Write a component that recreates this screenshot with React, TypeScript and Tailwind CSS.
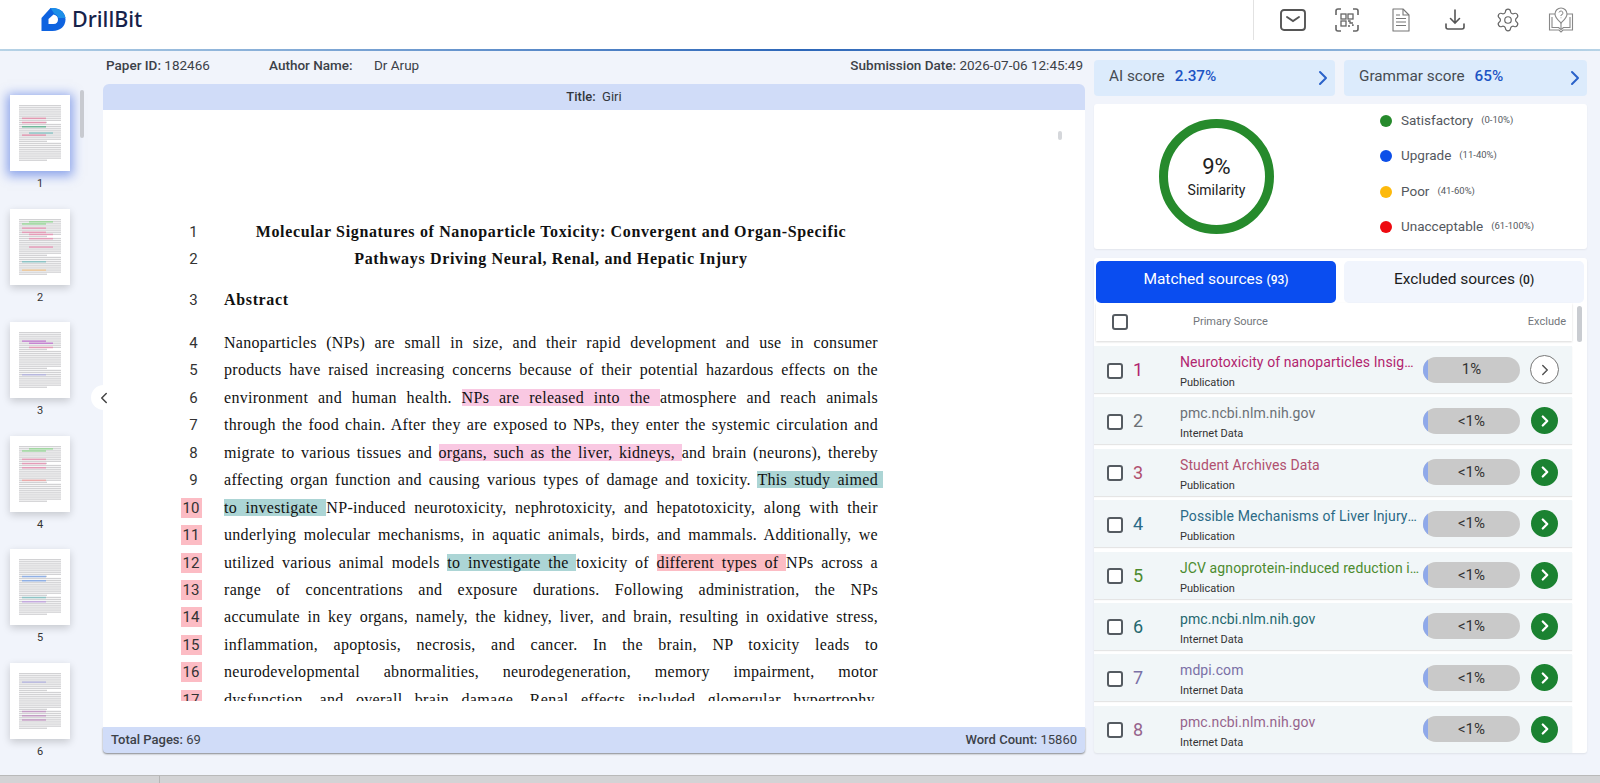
import { ChevronLeft, ChevronRight, Settings } from "lucide-react";

const sources = [
  { n: 1, title: "Neurotoxicity of nanoparticles Insights from Caenorhabditis", kind: "Publication", color: "text-[#b1256f]", pct: "1%", excluded: true },
  { n: 2, title: "pmc.ncbi.nlm.nih.gov", kind: "Internet Data", color: "text-[#6b7075]", pct: "<1%" },
  { n: 3, title: "Student Archives Data", kind: "Publication", color: "text-[#b0506f]", pct: "<1%" },
  { n: 4, title: "Possible Mechanisms of Liver Injury Induced by Nanoparticles", kind: "Publication", color: "text-[#2b6a86]", pct: "<1%" },
  { n: 5, title: "JCV agnoprotein-induced reduction in CXCL5/LIX secretion", kind: "Publication", color: "text-[#4c8b2f]", pct: "<1%" },
  { n: 6, title: "pmc.ncbi.nlm.nih.gov", kind: "Internet Data", color: "text-[#25686f]", pct: "<1%" },
  { n: 7, title: "mdpi.com", kind: "Internet Data", color: "text-[#7a70a6]", pct: "<1%" },
  { n: 8, title: "pmc.ncbi.nlm.nih.gov", kind: "Internet Data", color: "text-[#96648c]", pct: "<1%" },
];

const legend = [
  { label: "Satisfactory", range: "(0-10%)", dot: "bg-[#268a2c]" },
  { label: "Upgrade", range: "(11-40%)", dot: "bg-[#0d4fe8]" },
  { label: "Poor", range: "(41-60%)", dot: "bg-[#fdb90b]" },
  { label: "Unacceptable", range: "(61-100%)", dot: "bg-[#ee0a10]" },
];

const pink = "bg-[#f9c8e2]";
const teal = "bg-[#acd5d5]";
const red = "bg-[#fcbcc4]";

// page thumbnails: [row, colour] marks the highlighted rows
const thumbs: { active?: boolean; marks: Record<number, string> }[] = [
  { active: true, marks: { 6: "#e58aa8", 8: "#e58aa8", 10: "#58b08a", 13: "#7cc0c0", 14: "#e58aa8" } },
  { marks: { 1: "#8fd88f", 2: "#8fd88f", 4: "#e88fb0", 6: "#e88fb0", 7: "#e88fb0", 9: "#e88fb0", 13: "#e88fb0", 20: "#7cc0c0", 24: "#f2c48a" } },
  { marks: { 4: "#c070d0", 5: "#c070d0", 7: "#e88fb0", 20: "#b0b0e0" } },
  { marks: { 1: "#8fd88f", 2: "#8fd88f", 6: "#e88fb0", 8: "#e88fb0", 10: "#e88fb0", 16: "#f0a0a0" } },
  { marks: { 8: "#80a8e8", 10: "#80a8e8", 18: "#7cc0c0", 20: "#c0a0e0" } },
  { marks: { 4: "#b0b0e0", 18: "#c090c0", 20: "#c090c0", 22: "#c090c0" } },
];

function ThumbArt({ marks }: { marks: Record<number, string> }) {
  const rows = Array.from({ length: 27 }, (_, i) => i);
  return (
    <svg viewBox="0 0 60 76" className="block w-[60px] h-[76px]">
      <rect width="60" height="76" fill="#ffffff" />
      {rows.map((i) => (
        <rect key={i} x="9" y={10 + i * 2.1} width={i % 9 === 8 ? 28 : 42} height="1.3" fill="#b4b4b8" opacity="0.6" />
      ))}
      {rows.filter((i) => marks[i]).map((i) => (
        <rect key={i} x={12 + ((i * 7) % 14)} y={10 + i * 2.1} width="24" height="1.5" fill={marks[i]} opacity="0.8" />
      ))}
    </svg>
  );
}

function Logo() {
  return (
    <svg viewBox="0 0 24 24" className="w-[25px] h-[24px]">
      <path d="M0 11 L9 1 H11 C19 1 24 6 24 12.5 C24 19 19 24 11 24 H0 Z" fill="#0e63e0" />
      <path d="M9 1 H11 C18 1 23 5 24 11 L17 11 C16 8.5 15 7.5 13 7 Z" fill="#1d8fe8" />
      <path d="M7 12 L12 7.5 C15 8 16.5 10 16.5 12.5 C16.5 15 15 17 12 17 H7 Z" fill="#ffffff" />
    </svg>
  );
}

function MailIcon() {
  return (
    <svg viewBox="0 0 26 22" className="w-[26px] h-[22px]" fill="none" stroke="#555" strokeWidth="1.9">
      <rect x="1" y="1" width="24" height="20" rx="3" />
      <path d="M7 8 L13 12 L19 8" strokeLinecap="round" />
    </svg>
  );
}

function QrIcon() {
  return (
    <svg viewBox="0 0 24 24" className="w-[24px] h-[24px]" fill="none" stroke="#666" strokeWidth="1.3">
      <path d="M1 7 V3 Q1 1 3 1 H6 M18 1 H21 Q23 1 23 3 V7 M23 17 V21 Q23 23 21 23 H18 M6 23 H3 Q1 23 1 21 V17" strokeWidth="1.6" />
      <rect x="6" y="6" width="5" height="5" />
      <rect x="13" y="6" width="5" height="5" />
      <rect x="6" y="13" width="5" height="5" />
      <path d="M13 13 H15 V15 H18 M13 18 H15 M17 17 H18 V18" />
    </svg>
  );
}

function DocIcon() {
  return (
    <svg viewBox="0 0 18 24" className="w-[18px] h-[24px]" fill="none" stroke="#777" strokeWidth="1.1">
      <path d="M1 1 H11 L17 7 V23 H1 Z" strokeLinejoin="round" />
      <path d="M11 1 V7 H17" />
      <path d="M4 7 H8 M4 10.5 H14 M4 14 H14 M4 17.5 H14" />
    </svg>
  );
}

function DownloadIcon() {
  return (
    <svg viewBox="0 0 20 22" className="w-[20px] h-[22px]" fill="none" stroke="#555" strokeWidth="1.6">
      <path d="M10 1 V14 M5.5 9.5 L10 14 L14.5 9.5" strokeLinecap="round" />
      <path d="M1 15 V18 Q1 20 3 20 H17 Q19 20 19 18 V15" strokeLinecap="round" />
    </svg>
  );
}

function BookHelpIcon() {
  return (
    <svg viewBox="0 0 26 26" className="w-[26px] h-[26px]" fill="none" stroke="#888" strokeWidth="1.1">
      <path d="M7 7 H1.5 V23 H11 L13 25 L15 23 H24.5 V7 H19" />
      <path d="M4 10 V20.5 H10.5 L13 22.5 L15.5 20.5 H22 V10" />
      <path d="M13 16 C9 12 7 10.5 7 7 A6 6 0 0 1 19 7 C19 10.5 17 12 13 16 Z" fill="#fff" />
      <path d="M13 16 V22" />
      <path d="M11 5.5 A2 2 0 1 1 13 8 V9 M13 10.5 V11.2" strokeWidth="1" />
    </svg>
  );
}

function Checkbox() {
  return <span className="block w-[16px] h-[16px] shrink-0 rounded-[3px] border-2 border-[#555b61] bg-white" />;
}

function DocLine({ no, flag, children, last, center, bold, className }: {
  no: number;
  flag?: boolean;
  children: React.ReactNode;
  last?: boolean;
  center?: boolean;
  bold?: boolean;
  className?: string;
}) {
  return (
    <div className={`flex items-center h-[27.45px] ${className || ""}`}>
      <div className="w-[44px] shrink-0 flex justify-center">
        <span className={`w-[21px] text-center text-[15px] leading-[20px] font-['Roboto',sans-serif] tracking-normal text-[#333] ${flag ? "bg-[#fcbcc4]" : "ml-[5px]"}`}>
          {no}
        </span>
      </div>
      <div
        className={`w-[654px] ml-[11px] text-[#111] ${
          center ? "text-center whitespace-nowrap" : last ? "text-left" : "text-justify [text-align-last:justify]"
        } ${bold ? "font-bold" : ""}`}
      >
        {children}
      </div>
    </div>
  );
}

export default function App() {
  return (
    <div className="w-[1600px] h-[783px] overflow-hidden flex flex-col bg-[#f1f4fb] font-['Roboto',sans-serif]">
      {/* Header */}
      <header className="h-[49px] shrink-0 bg-white flex items-start justify-between">
        <div className="flex items-center ml-[41px] mt-[7px] gap-[6px]">
          <Logo />
          <span className="text-[21.5px] leading-[24px] font-medium text-[#16224a] font-['Noto_Sans',sans-serif]">DrillBit</span>
        </div>
        <div className="flex items-center h-[40px]">
          <div className="w-px h-[40px] bg-[#e2e2e2]" />
          <div className="flex items-center h-[38px] pl-[26px] pr-[26px] gap-[29px]">
            <MailIcon />
            <QrIcon />
            <span className="ml-[4px] mr-[2px] flex"><DocIcon /></span>
            <span className="ml-[4px] mr-[1px] flex"><DownloadIcon /></span>
            <Settings className="w-[26px] h-[26px] text-[#666] mr-[-2px]" strokeWidth={1.1} />
            <BookHelpIcon />
          </div>
        </div>
      </header>
      <div className="h-[2px] shrink-0 bg-gradient-to-r from-[#b7d3e6] via-[#2c66b8] to-[#b7d3e6]" />

      <div className="flex-1 flex min-h-0">
        {/* Thumbnails */}
        <aside className="w-[103px] shrink-0 relative overflow-hidden pt-[44px] pl-[10px]">
          <div className="flex flex-col gap-[18.6px] w-[60px]">
            {thumbs.map((t, i) => (
              <div key={i} className="flex flex-col items-center">
                <div className={t.active ? "shadow-[0_2px_10px_3px_rgba(60,100,220,0.55)]" : "shadow-[0_3px_8px_rgba(0,0,0,0.18)]"}>
                  <ThumbArt marks={t.marks} />
                </div>
                <span className="mt-[7px] h-[12px] text-[11px] leading-[12px] text-[#333]">{i + 1}</span>
              </div>
            ))}
          </div>
          <div className="absolute left-[80px] top-[39px] w-[4px] h-[48px] rounded bg-[#c8cad0]" />
        </aside>

        {/* Document */}
        <main className="w-[982px] shrink-0 flex flex-col">
          <div className="h-[33px] shrink-0 flex items-center justify-between text-[13.5px] leading-[26px] text-[#3c4148] pb-[9px] pt-[4px]">
            <div className="flex">
              <span className="ml-[3px] w-[163px]"><span className="font-medium">Paper ID:</span> 182466</span>
              <span className="w-[105px] font-medium">Author Name:</span>
              <span>Dr Arup</span>
            </div>
            <span className="mr-[2px]"><span className="font-medium">Submission Date:</span> 2026-07-06 12:45:49</span>
          </div>
          <div className="h-[26px] shrink-0 rounded-t-[6px] bg-[#d0dcf8] flex items-center justify-center text-[13px] text-[#33373d]">
            <span className="font-medium">Title:</span>&nbsp; Giri
          </div>
          <div className="relative h-[617px] shrink-0 bg-white">
            <div className="absolute left-[-12px] top-[275px] w-[25px] h-[25px] rounded-full bg-white flex items-center justify-center">
              <ChevronLeft className="w-[18px] h-[18px] text-[#444]" strokeWidth={2} />
            </div>
            <div className="absolute left-[955px] top-[21px] w-[4px] h-[9px] rounded-sm bg-[#d5d7db]" />
            <div className="h-[591px] ml-[66px] pt-[108px] overflow-hidden font-['Liberation_Serif',serif] text-[16px] leading-[22px] tracking-[0.3px]">
              <DocLine no={1} center bold className="tracking-[0.65px]">Molecular Signatures of Nanoparticle Toxicity: Convergent and Organ-Specific</DocLine>
              <DocLine no={2} center bold className="tracking-[0.65px]">Pathways Driving Neural, Renal, and Hepatic Injury</DocLine>
              <DocLine no={3} last bold className="mt-[13.5px] tracking-[0.65px]">Abstract</DocLine>
              <DocLine no={4} className="mt-[15.5px]">Nanoparticles (NPs) are small in size, and their rapid development and use in consumer</DocLine>
              <DocLine no={5}>products have raised increasing concerns because of their potential hazardous effects on the</DocLine>
              <DocLine no={6}>environment and human health. <span className={pink}>NPs are released into the </span>atmosphere and reach animals</DocLine>
              <DocLine no={7}>through the food chain. After they are exposed to NPs, they enter the systemic circulation and</DocLine>
              <DocLine no={8}>migrate to various tissues and <span className={pink}>organs, such as the liver, kidneys, </span>and brain (neurons), thereby</DocLine>
              <DocLine no={9}>affecting organ function and causing various types of damage and toxicity. <span className={`${teal} pr-[5px] mr-[-5px]`}>This study aimed</span></DocLine>
              <DocLine no={10} flag><span className={teal}>to investigate </span>NP-induced neurotoxicity, nephrotoxicity, and hepatotoxicity, along with their</DocLine>
              <DocLine no={11} flag>underlying molecular mechanisms, in aquatic animals, birds, and mammals. Additionally, we</DocLine>
              <DocLine no={12} flag>utilized various animal models <span className={teal}>to investigate the </span>toxicity of <span className={red}>different types of </span>NPs across a</DocLine>
              <DocLine no={13} flag>range of concentrations and exposure durations. Following administration, the NPs</DocLine>
              <DocLine no={14} flag>accumulate in key organs, namely, the kidney, liver, and brain, resulting in oxidative stress,</DocLine>
              <DocLine no={15} flag>inflammation, apoptosis, necrosis, and cancer. In the brain, NP toxicity leads to</DocLine>
              <DocLine no={16} flag>neurodevelopmental abnormalities, neurodegeneration, memory impairment, motor</DocLine>
              <DocLine no={17} flag>dysfunction, and overall brain damage. Renal effects included glomerular hypertrophy,</DocLine>
            </div>
          </div>
          <div className="h-[26px] shrink-0 rounded-b-[4px] bg-[#d0dcf8] shadow-[0_1px_2px_rgba(0,0,0,0.45)] flex items-center justify-between px-[8px] text-[13px] text-[#3c4148]">
            <span><span className="font-medium">Total Pages:</span> 69</span>
            <span><span className="font-medium">Word Count:</span> 15860</span>
          </div>
        </main>

        {/* Right column */}
        <section className="w-[493px] shrink-0 ml-[9px] pt-[9px] flex flex-col">
          <div className="flex gap-[9px] h-[36px] shrink-0">
            <ScoreBox label="AI score" value="2.37%" className="w-[241px]" />
            <ScoreBox label="Grammar score" value="65%" className="w-[243px]" />
          </div>

          <div className="mt-[8px] h-[145px] shrink-0 w-[493px] bg-white rounded-[3px] flex shadow-[0_1px_2px_rgba(0,0,0,0.06)]">
            <div className="ml-[65px] mt-[15px] w-[115px] h-[115px] rounded-full border-[9.5px] border-[#268a2c] flex flex-col items-center justify-center text-[#222]">
              <span className="text-[22px] leading-[24px] mt-[2px]">9%</span>
              <span className="text-[14px] leading-[20px] mt-[1px]">Similarity</span>
            </div>
            <div className="ml-[106px] -mt-[2px] flex flex-col">
              {legend.map((l) => (
                <div key={l.label} className="flex items-center h-[35.5px]">
                  <span className={`w-[12px] h-[12px] rounded-full mt-[2px] ${l.dot}`} />
                  <span className="ml-[9px] text-[13.5px] text-[#54585e]">{l.label}</span>
                  <span className="ml-[8px] text-[9.5px] text-[#54585e]">{l.range}</span>
                </div>
              ))}
            </div>
          </div>

          <div className="mt-[9px] w-[493px] h-[495px] shrink-0 bg-white rounded-[3px] shadow-[0_1px_2px_rgba(0,0,0,0.08)] flex flex-col relative overflow-hidden">
            <div className="flex gap-[8px] px-[2px] pt-[3px] shrink-0">
              <div className="w-[240px] h-[42px] pb-[4px] rounded-[5px] bg-[#0a4df0] text-white flex items-center justify-center text-[15.5px]">
                Matched sources&nbsp;<span className="text-[12px] font-medium">(93)</span>
              </div>
              <div className="w-[240px] h-[42px] pb-[4px] rounded-[5px] bg-[#f1f5fd] text-[#1c1c1c] flex items-center justify-center text-[15.5px]">
                Excluded sources&nbsp;<span className="text-[12px] font-medium">(0)</span>
              </div>
            </div>
            <div className="h-[38px] w-[476px] shrink-0 ml-[2px] flex items-center shadow-[0_1px_2px_rgba(0,0,0,0.15)] text-[11px] text-[#72767b]">
              <span className="ml-[16px]"><Checkbox /></span>
              <span className="ml-[65px]">Primary Source</span>
              <span className="ml-auto mr-[6px]">Exclude</span>
            </div>
            <div className="absolute left-[483px] top-[48px] w-[5px] h-[36px] rounded bg-[#c9ccd1]" />

            <div className="mt-[5px] flex flex-col gap-[4.4px] w-[478px]">
              {sources.map((s) => (
                <div key={s.n} className="h-[47px] shrink-0 bg-[#f1f6f8] shadow-[0_1px_1px_rgba(0,0,0,0.1)] flex items-center">
                  <span className="ml-[13px] mt-[2px]"><Checkbox /></span>
                  <span className={`ml-[10px] w-[47px] text-[18px] ${s.color}`}>{s.n}</span>
                  <div className="w-[240px] pt-[3px]">
                    <div className={`truncate text-[14px] leading-[18px] tracking-[0.1px] ${s.color}`}>{s.title}</div>
                    <div className="mt-[5px] text-[11px] leading-[13px] text-[#333]">{s.kind}</div>
                  </div>
                  <div className="ml-[3px] w-[97px] h-[26px] shrink-0 rounded-full bg-[#c9c9c9] overflow-hidden relative flex items-center justify-center text-[15px] text-[#333]">
                    <span className="absolute left-0 top-0 bottom-0 w-[5px] bg-[#8fa9ea]" />
                    {s.pct}
                  </div>
                  {s.excluded ? (
                    <div className="ml-[10px] w-[29px] h-[29px] rounded-full border border-[#777] bg-white flex items-center justify-center">
                      <ChevronRight className="w-[18px] h-[18px] text-[#555]" strokeWidth={2} />
                    </div>
                  ) : (
                    <div className="ml-[11px] w-[27px] h-[27px] rounded-full bg-[#1b8231] flex items-center justify-center">
                      <ChevronRight className="w-[18px] h-[18px] text-white" strokeWidth={3} />
                    </div>
                  )}
                </div>
              ))}
            </div>
          </div>
        </section>
      </div>

      {/* Window edge */}
      <div className="h-[8px] shrink-0 flex border-t border-[#b9b9b9] bg-[#d3d3d5]">
        <div className="w-[160px] border-r border-[#b5b5b5]" />
      </div>
    </div>
  );
}

function ScoreBox({ label, value, className }: { label: string; value: string; className: string }) {
  return (
    <div className={`${className} rounded-[4px] bg-[#dcebfc] flex items-center pb-[3px] pl-[15px] text-[15.3px] text-[#464b52]`}>
      <span>{label}</span>
      <span className="ml-[10px] font-medium text-[#1d54c4]">{value}</span>
      <ChevronRight className="ml-auto mt-[3px] w-[24px] h-[24px] text-[#2a62c9]" strokeWidth={2} />
    </div>
  );
}
